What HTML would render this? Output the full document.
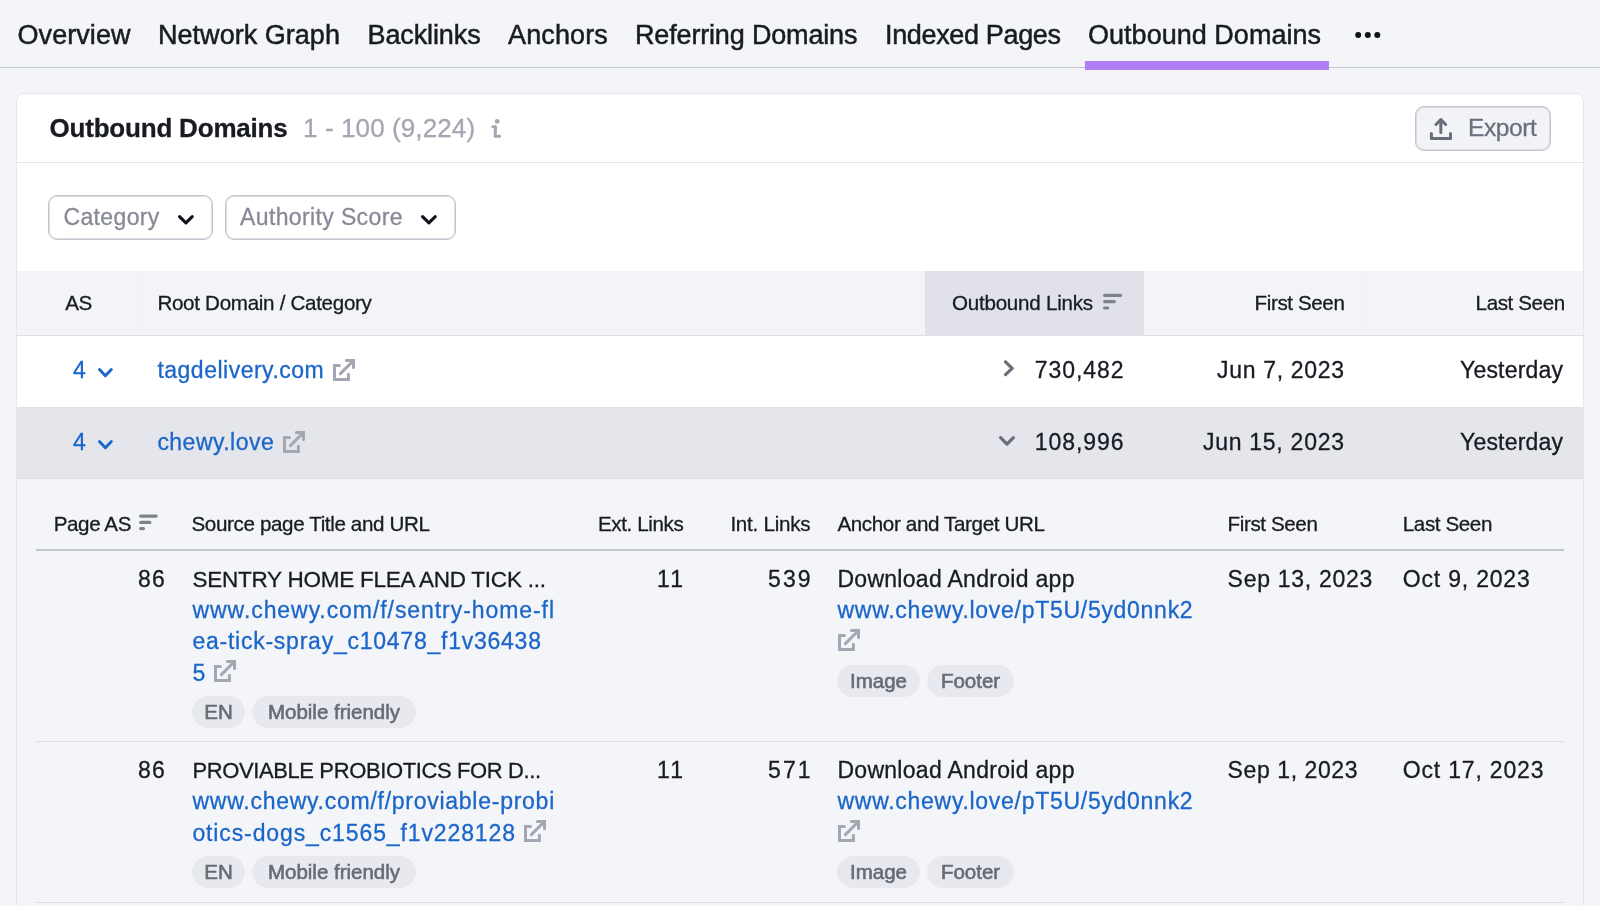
<!DOCTYPE html>
<html><head><meta charset="utf-8"><style>
*{box-sizing:border-box;margin:0;padding:0}
html,body{width:1600px;height:906px;overflow:hidden}
body{background:#f4f5f9;position:relative;font-family:"Liberation Sans",sans-serif;color:#191b23}
.a{position:absolute;white-space:nowrap;-webkit-text-stroke:0.3px currentColor}
.hr{position:absolute;left:0;width:1600px;top:67px;height:1px;background:#c3c6ce}
.purple{position:absolute;left:1085px;width:244px;top:61px;height:9px;background:#b27ef6}
.dot{position:absolute;width:5.5px;height:5.5px;border-radius:50%;background:#191b23;top:32px}
.card{position:absolute;left:16px;top:93px;width:1568px;height:900px;background:#fff;border:1px solid #e6e7ec;border-radius:8px}
.ln{position:absolute;height:1px}
.btn{position:absolute;border:1px solid #c2c5cd;box-shadow:inset 0 0 0 1px rgba(194,197,205,0.55);border-radius:9px}
.chip{position:absolute;border-radius:16px;background:#e8e9ee;color:#686b77;font-size:20.5px;text-align:center;white-space:nowrap;-webkit-text-stroke:0.6px currentColor}
</style></head><body>
<div id="w" style="position:absolute;left:0;top:0;width:1600px;height:906px;will-change:transform"><div class="a" style="left:17.50px;top:17.64px;font-size:27px;line-height:34px;letter-spacing:0.068px;color:#191b23;-webkit-text-stroke:0.5px currentColor;">Overview</div>
<div class="a" style="left:158.00px;top:17.64px;font-size:27px;line-height:34px;letter-spacing:0.031px;color:#191b23;-webkit-text-stroke:0.5px currentColor;">Network Graph</div>
<div class="a" style="left:367.50px;top:17.64px;font-size:27px;line-height:34px;letter-spacing:-0.112px;color:#191b23;-webkit-text-stroke:0.5px currentColor;">Backlinks</div>
<div class="a" style="left:508.00px;top:17.64px;font-size:27px;line-height:34px;letter-spacing:0.133px;color:#191b23;-webkit-text-stroke:0.5px currentColor;">Anchors</div>
<div class="a" style="left:635.00px;top:17.64px;font-size:27px;line-height:34px;letter-spacing:-0.164px;color:#191b23;-webkit-text-stroke:0.5px currentColor;">Referring Domains</div>
<div class="a" style="left:885.00px;top:17.64px;font-size:27px;line-height:34px;letter-spacing:-0.344px;color:#191b23;-webkit-text-stroke:0.5px currentColor;">Indexed Pages</div>
<div class="a" style="left:1088.00px;top:17.64px;font-size:27px;line-height:34px;letter-spacing:0.025px;color:#191b23;-webkit-text-stroke:0.5px currentColor;">Outbound Domains</div>
<svg class="a" style="left:1350px;top:25px" width="35" height="20" viewBox="0 0 35 20"><circle cx="8.2" cy="9.9" r="3" fill="#10121a"/><circle cx="17.8" cy="9.9" r="3" fill="#10121a"/><circle cx="27.3" cy="9.9" r="3" fill="#10121a"/></svg>
<div class="hr"></div><div class="purple"></div>
<div class="card"></div>
<div class="ln" style="left:17px;width:1566px;top:162px;background:#e4e5ea"></div>
<div class="a" style="left:49.50px;top:111.79px;font-size:26px;line-height:32px;letter-spacing:-0.197px;color:#191b23;font-weight:bold;">Outbound Domains</div>
<div class="a" style="left:303.00px;top:111.79px;font-size:26px;line-height:32px;letter-spacing:0.107px;color:#a4a7b3;">1 - 100 (9,224)</div>
<svg class="a" style="left:488px;top:116px" width="16" height="24" viewBox="0 0 16 24"><circle cx="9.2" cy="5.4" r="2.4" fill="#a4a7b3"/><path d="M4.8 10.8 H7.6 L7 20.3 H11.6" fill="none" stroke="#a4a7b3" stroke-width="3" stroke-linecap="round" stroke-linejoin="round"/></svg>
<div class="btn" style="left:1415px;top:106px;width:136px;height:45px;background:#f2f3f6"></div>
<svg class="a" style="left:1420px;top:110px" width="40" height="35" viewBox="0 0 40 35"><path d="M20.85 22.6 V9.5 M16 14.5 L20.85 9.5 L25.7 14.5 M11.4 23.6 V28.4 H30.5 V23.6" fill="none" stroke="#6a6d79" stroke-width="3" stroke-linecap="round" stroke-linejoin="round"/></svg>
<div class="a" style="left:1468.00px;top:112.31px;font-size:24.5px;line-height:31px;letter-spacing:-0.400px;color:#6c6f7b;">Export</div>
<div class="btn" style="left:48px;top:195px;width:165px;height:45px;background:#fff"></div>
<div class="btn" style="left:225px;top:195px;width:231px;height:45px;background:#fff"></div>
<div class="a" style="left:63.50px;top:202.53px;font-size:23px;line-height:29px;letter-spacing:0.361px;color:#878a96;">Category</div>
<div class="a" style="left:240.00px;top:202.53px;font-size:23px;line-height:29px;letter-spacing:0.375px;color:#878a96;">Authority Score</div>
<svg class="a" style="left:175px;top:211.9px" width="21.80000000000001" height="15.5" viewBox="-3 -3 21.80000000000001 15.5"><path d="M1.55 1.55 L7.900000000000006 7.95 L14.25000000000001 1.55" fill="none" stroke="#10121a" stroke-width="3.1" stroke-linecap="round" stroke-linejoin="round"/></svg>
<svg class="a" style="left:417.6px;top:211.9px" width="21.799999999999955" height="15.5" viewBox="-3 -3 21.799999999999955 15.5"><path d="M1.55 1.55 L7.899999999999977 7.95 L14.249999999999954 1.55" fill="none" stroke="#10121a" stroke-width="3.1" stroke-linecap="round" stroke-linejoin="round"/></svg>
<div class="a" style="left:17px;top:271px;width:1566px;height:64px;background:#f3f4f8"></div>
<div class="a" style="left:925px;top:271px;width:219px;height:64px;background:#e1e2e9"></div>
<div class="ln" style="left:17px;width:1566px;top:335px;background:#dddfe5"></div>
<div class="a" style="left:65.20px;top:289.56px;font-size:20.6px;line-height:26px;letter-spacing:-0.400px;color:#191b23;">AS</div>
<div class="a" style="left:157.40px;top:289.56px;font-size:20.6px;line-height:26px;letter-spacing:-0.305px;color:#191b23;">Root Domain / Category</div>
<div class="a" style="left:952.00px;top:289.56px;font-size:20.6px;line-height:26px;letter-spacing:-0.250px;color:#191b23;">Outbound Links</div>
<div class="a" style="left:1254.60px;top:289.56px;font-size:20.6px;line-height:26px;letter-spacing:-0.400px;color:#191b23;">First Seen</div>
<div class="a" style="left:1475.60px;top:289.56px;font-size:20.6px;line-height:26px;letter-spacing:-0.400px;color:#191b23;">Last Seen</div>
<svg class="a" style="left:1100px;top:290px" width="26" height="22" viewBox="0 0 26 22"><path d="M4.6 5.3 H20.6 M4.6 11.6 H14.3 M4.6 18 H7.8" fill="none" stroke="#7f828d" stroke-width="3.2" stroke-linecap="round"/></svg>
<div class="a" style="left:17px;top:336px;width:1566px;height:71px;background:#fff"></div>
<div class="ln" style="left:17px;width:1566px;top:407px;background:#dfe0e6"></div>
<div class="a" style="left:17px;top:408px;width:1566px;height:70px;background:#e5e6eb"></div>
<div class="ln" style="left:17px;width:1566px;top:478px;background:#dcdde4"></div>
<div class="a" style="left:17px;top:479px;width:1566px;height:430px;background:#f4f5f9"></div>
<div class="a" style="left:136px;top:408px;width:1px;height:70px;background:#e1e2e7"></div>
<div class="a" style="left:925px;top:408px;width:1px;height:70px;background:#e1e2e7"></div>
<div class="a" style="left:1144px;top:408px;width:1px;height:70px;background:#e1e2e7"></div>
<div class="a" style="left:1364px;top:408px;width:1px;height:70px;background:#e1e2e7"></div>
<div class="a" style="left:136px;top:271px;width:1px;height:64px;background:#eff0f4"></div>
<div class="a" style="left:1364px;top:271px;width:1px;height:64px;background:#eff0f4"></div>
<div class="a" style="left:73.00px;top:355.73px;font-size:23px;line-height:29px;letter-spacing:0.000px;color:#1b66c9;">4</div>
<svg class="a" style="left:95.3px;top:364.59999999999997px" width="20.799999999999997" height="15.300000000000011" viewBox="-3 -3 20.799999999999997 15.300000000000011"><path d="M1.45 1.45 L7.399999999999999 7.850000000000011 L13.349999999999998 1.45" fill="none" stroke="#1b66c9" stroke-width="2.9" stroke-linecap="round" stroke-linejoin="round"/></svg>
<div class="a" style="left:157.40px;top:355.73px;font-size:23px;line-height:29px;letter-spacing:0.498px;color:#1b66c9;">tagdelivery.com</div>
<svg class="a" style="left:333px;top:359px" width="22" height="22" viewBox="0 0 22 22"><path d="M6.4 6.4 H1.5 V20.5 H15.4 V15.2 M13.4 1.5 H20.5 V8.6 M19.5 2.5 L7.4 14.6" fill="none" stroke="#a4a7b3" stroke-width="3" stroke-linecap="round" stroke-linejoin="miter"/></svg>
<div class="a" style="left:1034.80px;top:355.73px;font-size:23px;line-height:29px;letter-spacing:0.929px;color:#191b23;">730,482</div>
<div class="a" style="left:1217.00px;top:355.73px;font-size:23px;line-height:29px;letter-spacing:0.675px;color:#191b23;">Jun 7, 2023</div>
<div class="a" style="left:1460.00px;top:355.73px;font-size:23px;line-height:29px;letter-spacing:0.188px;color:#191b23;">Yesterday</div>
<div class="a" style="left:73.00px;top:427.73px;font-size:23px;line-height:29px;letter-spacing:0.000px;color:#1b66c9;">4</div>
<svg class="a" style="left:95.3px;top:436.59999999999997px" width="20.799999999999997" height="15.300000000000011" viewBox="-3 -3 20.799999999999997 15.300000000000011"><path d="M1.45 1.45 L7.399999999999999 7.850000000000011 L13.349999999999998 1.45" fill="none" stroke="#1b66c9" stroke-width="2.9" stroke-linecap="round" stroke-linejoin="round"/></svg>
<div class="a" style="left:157.40px;top:427.73px;font-size:23px;line-height:29px;letter-spacing:0.469px;color:#1b66c9;">chewy.love</div>
<svg class="a" style="left:283px;top:431px" width="22" height="22" viewBox="0 0 22 22"><path d="M6.4 6.4 H1.5 V20.5 H15.4 V15.2 M13.4 1.5 H20.5 V8.6 M19.5 2.5 L7.4 14.6" fill="none" stroke="#a4a7b3" stroke-width="3" stroke-linecap="round" stroke-linejoin="miter"/></svg>
<div class="a" style="left:1034.80px;top:427.73px;font-size:23px;line-height:29px;letter-spacing:0.929px;color:#191b23;">108,996</div>
<div class="a" style="left:1202.90px;top:427.73px;font-size:23px;line-height:29px;letter-spacing:0.736px;color:#191b23;">Jun 15, 2023</div>
<div class="a" style="left:1460.00px;top:427.73px;font-size:23px;line-height:29px;letter-spacing:0.188px;color:#191b23;">Yesterday</div>
<svg class="a" style="left:1000px;top:357px" width="18" height="22" viewBox="0 0 18 22"><path d="M5.5 4.8 L12.2 11.3 L5.5 17.6" fill="none" stroke="#6b6e7a" stroke-width="3.2" stroke-linecap="round" stroke-linejoin="round"/></svg>
<svg class="a" style="left:996px;top:433.3px" width="22" height="15.699999999999989" viewBox="-3 -3 22 15.699999999999989"><path d="M1.6 1.6 L8.0 8.099999999999989 L14.4 1.6" fill="none" stroke="#6b6e7a" stroke-width="3.2" stroke-linecap="round" stroke-linejoin="round"/></svg>
<div class="ln" style="left:36px;width:1528px;top:549px;height:2px;background:#c3c6ce"></div>
<div class="a" style="left:53.70px;top:510.86px;font-size:20.6px;line-height:26px;letter-spacing:-0.400px;color:#191b23;">Page AS</div>
<svg class="a" style="left:136px;top:509px" width="26" height="26" viewBox="0 0 26 26"><path d="M4.7 7.2 H20.2 M4.7 13.4 H13.8 M4.7 19.6 H7.5" fill="none" stroke="#7f828d" stroke-width="3.2" stroke-linecap="round"/></svg>
<div class="a" style="left:191.50px;top:510.86px;font-size:20.6px;line-height:26px;letter-spacing:-0.370px;color:#191b23;">Source page Title and URL</div>
<div class="a" style="left:598.00px;top:510.86px;font-size:20.6px;line-height:26px;letter-spacing:-0.400px;color:#191b23;">Ext. Links</div>
<div class="a" style="left:730.40px;top:510.86px;font-size:20.6px;line-height:26px;letter-spacing:-0.256px;color:#191b23;">Int. Links</div>
<div class="a" style="left:837.40px;top:510.86px;font-size:20.6px;line-height:26px;letter-spacing:-0.364px;color:#191b23;">Anchor and Target URL</div>
<div class="a" style="left:1227.60px;top:510.86px;font-size:20.6px;line-height:26px;letter-spacing:-0.400px;color:#191b23;">First Seen</div>
<div class="a" style="left:1402.80px;top:510.86px;font-size:20.6px;line-height:26px;letter-spacing:-0.400px;color:#191b23;">Last Seen</div>
<div class="a" style="left:138.00px;top:565.03px;font-size:23px;line-height:29px;letter-spacing:1.175px;color:#191b23;">86</div>
<div class="a" style="left:192.40px;top:565.70px;font-size:22.5px;line-height:28px;letter-spacing:-0.233px;color:#191b23;">SENTRY HOME FLEA AND TICK ...</div>
<div class="a" style="left:192.53px;top:596.23px;font-size:23px;line-height:29px;letter-spacing:0.934px;color:#1b66c9;">www.chewy.com/f/sentry-home-fl</div>
<div class="a" style="left:192.40px;top:627.43px;font-size:23px;line-height:29px;letter-spacing:0.758px;color:#1b66c9;">ea-tick-spray_c10478_f1v36438</div>
<div class="a" style="left:192.40px;top:658.63px;font-size:23px;line-height:29px;letter-spacing:0.000px;color:#1b66c9;">5</div>
<svg class="a" style="left:214px;top:660px" width="22" height="22" viewBox="0 0 22 22"><path d="M6.4 6.4 H1.5 V20.5 H15.4 V15.2 M13.4 1.5 H20.5 V8.6 M19.5 2.5 L7.4 14.6" fill="none" stroke="#a4a7b3" stroke-width="3" stroke-linecap="round" stroke-linejoin="miter"/></svg>
<div class="a" style="left:657.00px;top:565.03px;font-size:23px;line-height:29px;letter-spacing:2.125px;color:#191b23;">11</div>
<div class="a" style="left:768.00px;top:565.03px;font-size:23px;line-height:29px;letter-spacing:2.113px;color:#191b23;">539</div>
<div class="a" style="left:837.40px;top:565.03px;font-size:23px;line-height:29px;letter-spacing:0.295px;color:#191b23;">Download Android app</div>
<div class="a" style="left:837.52px;top:596.23px;font-size:23px;line-height:29px;letter-spacing:0.716px;color:#1b66c9;">www.chewy.love/pT5U/5yd0nnk2</div>
<svg class="a" style="left:838px;top:629px" width="22" height="22" viewBox="0 0 22 22"><path d="M6.4 6.4 H1.5 V20.5 H15.4 V15.2 M13.4 1.5 H20.5 V8.6 M19.5 2.5 L7.4 14.6" fill="none" stroke="#a4a7b3" stroke-width="3" stroke-linecap="round" stroke-linejoin="miter"/></svg>
<div class="chip" style="left:837px;top:665px;width:83px;height:32px;line-height:32px">Image</div>
<div class="chip" style="left:927px;top:665px;width:87px;height:32px;line-height:32px">Footer</div>
<div class="chip" style="left:192px;top:696px;width:53px;height:32px;line-height:32px">EN</div>
<div class="chip" style="left:252px;top:696px;width:164px;height:32px;line-height:32px">Mobile friendly</div>
<div class="a" style="left:1227.60px;top:565.03px;font-size:23px;line-height:29px;letter-spacing:0.720px;color:#191b23;">Sep 13, 2023</div>
<div class="a" style="left:1402.80px;top:565.03px;font-size:23px;line-height:29px;letter-spacing:0.803px;color:#191b23;">Oct 9, 2023</div>
<div class="ln" style="left:36px;width:1528px;top:741px;background:#dfe0e6"></div>
<div class="a" style="left:138.00px;top:756.23px;font-size:23px;line-height:29px;letter-spacing:1.175px;color:#191b23;">86</div>
<div class="a" style="left:192.40px;top:757.07px;font-size:22px;line-height:28px;letter-spacing:-0.385px;color:#191b23;">PROVIABLE PROBIOTICS FOR D...</div>
<div class="a" style="left:192.53px;top:787.43px;font-size:23px;line-height:29px;letter-spacing:0.738px;color:#1b66c9;">www.chewy.com/f/proviable-probi</div>
<div class="a" style="left:192.40px;top:818.63px;font-size:23px;line-height:29px;letter-spacing:0.884px;color:#1b66c9;">otics-dogs_c1565_f1v228128</div>
<svg class="a" style="left:524px;top:820px" width="22" height="22" viewBox="0 0 22 22"><path d="M6.4 6.4 H1.5 V20.5 H15.4 V15.2 M13.4 1.5 H20.5 V8.6 M19.5 2.5 L7.4 14.6" fill="none" stroke="#a4a7b3" stroke-width="3" stroke-linecap="round" stroke-linejoin="miter"/></svg>
<div class="a" style="left:657.00px;top:756.23px;font-size:23px;line-height:29px;letter-spacing:2.125px;color:#191b23;">11</div>
<div class="a" style="left:768.00px;top:756.23px;font-size:23px;line-height:29px;letter-spacing:2.113px;color:#191b23;">571</div>
<div class="a" style="left:837.40px;top:756.23px;font-size:23px;line-height:29px;letter-spacing:0.295px;color:#191b23;">Download Android app</div>
<div class="a" style="left:837.52px;top:787.43px;font-size:23px;line-height:29px;letter-spacing:0.716px;color:#1b66c9;">www.chewy.love/pT5U/5yd0nnk2</div>
<svg class="a" style="left:838px;top:820px" width="22" height="22" viewBox="0 0 22 22"><path d="M6.4 6.4 H1.5 V20.5 H15.4 V15.2 M13.4 1.5 H20.5 V8.6 M19.5 2.5 L7.4 14.6" fill="none" stroke="#a4a7b3" stroke-width="3" stroke-linecap="round" stroke-linejoin="miter"/></svg>
<div class="chip" style="left:837px;top:856px;width:83px;height:32px;line-height:32px">Image</div>
<div class="chip" style="left:927px;top:856px;width:87px;height:32px;line-height:32px">Footer</div>
<div class="chip" style="left:192px;top:856px;width:53px;height:32px;line-height:32px">EN</div>
<div class="chip" style="left:252px;top:856px;width:164px;height:32px;line-height:32px">Mobile friendly</div>
<div class="a" style="left:1227.60px;top:756.23px;font-size:23px;line-height:29px;letter-spacing:0.590px;color:#191b23;">Sep 1, 2023</div>
<div class="a" style="left:1402.80px;top:756.23px;font-size:23px;line-height:29px;letter-spacing:0.814px;color:#191b23;">Oct 17, 2023</div>
<div class="ln" style="left:36px;width:1528px;top:902px;background:#dfe0e6"></div>
</div></body></html>
